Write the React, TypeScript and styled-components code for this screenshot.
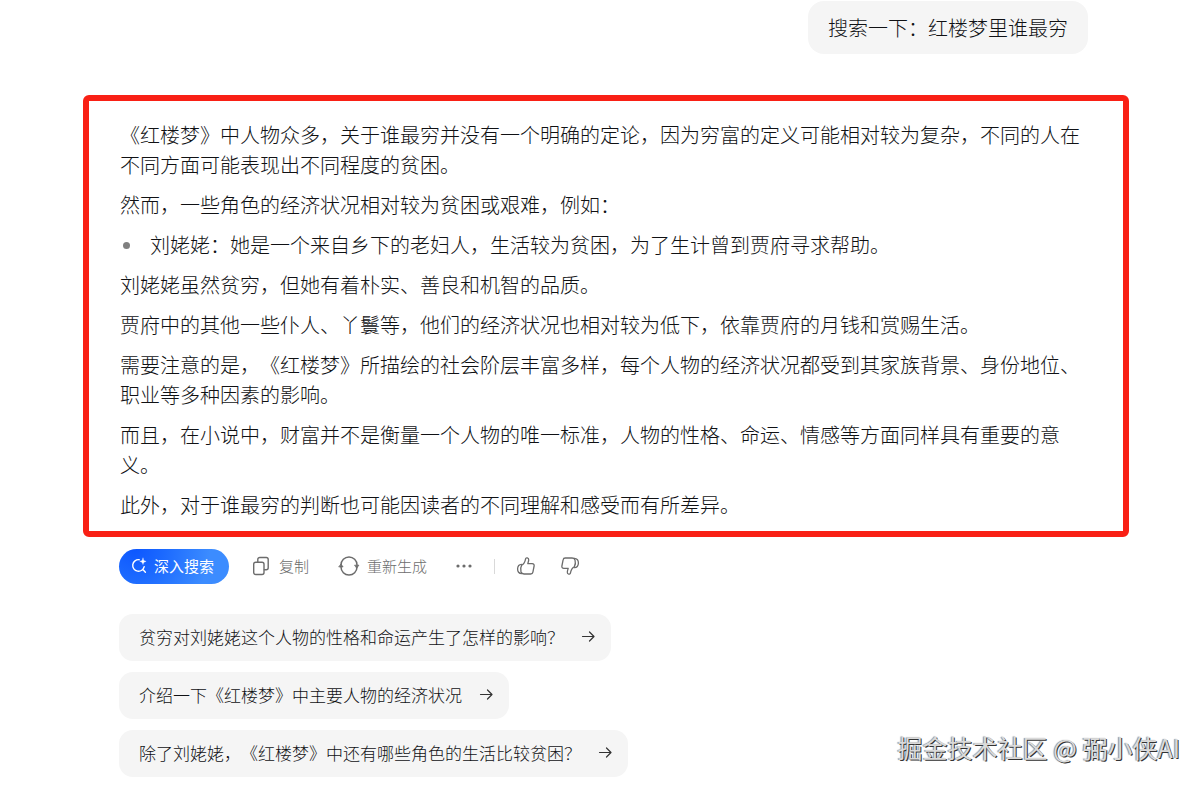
import React from "react";
import styled, { createGlobalStyle } from "styled-components";

const GlobalStyle = createGlobalStyle`
  * { box-sizing: border-box; }
  body {
    margin: 0;
    background: #fff;
    color: #101114;
    font-family: "Noto Sans CJK SC", sans-serif;
    font-weight: 300;
    text-spacing-trim: space-all;
  }
  button { font-family: inherit; text-spacing-trim: inherit; cursor: pointer; }
`;

const Page = styled.main`
  position: relative;
  padding: 1px 74px 9px 83px;
`;

const QuestionRow = styled.div`
  display: flex;
  justify-content: flex-end;
  padding-right: 41px;
  margin-bottom: 41px;
`;

const Question = styled.p`
  margin: 0;
  padding: 12px 20px 11px;
  border-radius: 16px;
  background: #f5f5f5;
  font-size: 20px;
  line-height: 30px;
`;

const Answer = styled.article`
  display: flex;
  flex-direction: column;
  gap: 10px;
  padding: 19px 35px 11px 31px;
  border: 6px solid #f92015;
  border-radius: 6px;
  font-size: 20px;
  line-height: 30px;
`;

const Paragraph = styled.p`
  margin: 0;
`;

const List = styled.ul`
  margin: 0;
  padding: 0;
  list-style: none;
`;

const Item = styled.li`
  display: flex;
  align-items: center;
  gap: 20px;
  padding-left: 3px;

  &::before {
    content: "";
    width: 7px;
    height: 7px;
    border-radius: 50%;
    background: #808080;
  }
`;

const Below = styled.div`
  padding-left: 36px;
`;

const Toolbar = styled.div`
  display: flex;
  align-items: center;
  height: 35px;
  margin: 12px 0 30px;
`;

const DeepSearch = styled.button`
  display: flex;
  align-items: center;
  gap: 5px;
  height: 35px;
  margin-right: 23px;
  padding: 0 15px 2px 12px;
  border: 0;
  border-radius: 18px;
  background: radial-gradient(circle at 14% 0%, #0d57ff 0%, #1c6aff 30%, #3c8cff 75%);
  color: #fff;
  font-size: 15px;
  font-weight: 400;
  line-height: 20px;
`;

const Action = styled.button<{ $after: number; $gap?: number }>`
  display: flex;
  align-items: center;
  gap: ${(p) => p.$gap ?? 0}px;
  margin-right: ${(p) => p.$after}px;
  padding: 0 0 1px;
  border: 0;
  background: none;
  color: #6c6c6c;
  font-size: 15px;
  font-weight: 300;
  line-height: 20px;
`;

const Divider = styled.span`
  width: 1px;
  height: 15px;
  margin-right: 21px;
  background: #d9d9d9;
`;

const Suggestions = styled.div`
  display: flex;
  flex-direction: column;
  align-items: flex-start;
  gap: 11px;
`;

const Suggestion = styled.button`
  display: flex;
  align-items: center;
  gap: 17px;
  height: 47px;
  padding: 0 16px 1px 20px;
  border: 0;
  border-radius: 14px;
  background: #f5f5f5;
  color: #101114;
  font-size: 17px;
  font-weight: 300;
  line-height: 26px;
`;

const Watermark = styled.div`
  position: absolute;
  right: 23px;
  bottom: 21px;
  color: #dadada;
  font-size: 25px;
  font-weight: 400;
  line-height: 36px;
  text-shadow: 1px 1px 0 #333, -1px 0 1px #8a8a8a;
`;

const Icon = styled.svg`
  display: block;
  flex: none;
  fill: none;
  stroke: currentColor;
  stroke-linecap: round;
  stroke-linejoin: round;
`;

const SearchIcon = () => (
  <Icon width="18" height="18" viewBox="0 0 18 18" strokeWidth="1.4">
    <path d="M8.2 2.7A5.8 5.8 0 1 0 13.2 9.6M11.9 12.6l2.5 2.7" />
    <path d="M12 1.2c.3 2.2 1 2.8 3.1 3.2-2.1.4-2.8 1-3.1 3.1-.4-2.1-1-2.7-3.2-3.1C11 4 11.600 3.400 12 1.200Z" fill="currentColor" strokeWidth=".4" />
  </Icon>
);

const CopyIcon = () => (
  <Icon width="18" height="20" viewBox="0 0 18 20" strokeWidth="1.4">
    <rect x="1.700" y="6.200" width="10.300" height="12.300" rx="2" />
    <path d="M5.800 5.800V3.500a2 2 0 0 1 2-2h6.400a2 2 0 0 1 2 2v8.300a2 2 0 0 1-2 2h-1.800" />
  </Icon>
);

const RefreshIcon = () => (
  <Icon width="22" height="20" viewBox="0 0 22 20" strokeWidth="1.500">
    <path d="M3 9a8 8 0 0 1 16 0M19 11a8 8 0 0 1-16 0" />
    <path d="M16.900 9.200h4l-2 2.600zM1.100 10.900h4l-2-2.600z" fill="currentColor" strokeWidth=".8" />
  </Icon>
);

const DotsIcon = () => (
  <Icon width="16" height="4" viewBox="0 0 16 4">
    <g fill="currentColor" stroke="none">
      <circle cx="2" cy="2" r="1.600" />
      <circle cx="8" cy="2" r="1.600" />
      <circle cx="14" cy="2" r="1.600" />
    </g>
  </Icon>
);

const ThumbIcon = ({ down = false }: { down?: boolean }) => (
  <Icon width="20" height="20" viewBox="0 0 20 20" strokeWidth="1.300">
    <g transform={down ? "rotate(180 10 10)" : undefined}>
      <path d="M5.700 9.200C7.900 8 9.100 5.500 9.600 2.800c.3-1.500 3.300-1.300 3.100 1.100-.1 1.400-.5 2.600-.9 3.700h4.400c1.500 0 2.200 1 1.900 2.400l-1.200 6.100c-.2 1.200-1 1.900-2.200 1.900H8c-1.300 0-2.500-.6-3-1.900-.6-2.200-.5-4.900.7-6.900Z" />
      <path d="M5.600 8.400c-2.400.1-3.900 1.900-4 4.400-.1 2.800 1.200 4.800 4.200 4.900" />
    </g>
  </Icon>
);

const ArrowIcon = () => (
  <Icon width="14" height="14" viewBox="0 0 14 14" strokeWidth="1.200" color="#333">
    <path d="M1.500 6.500h11.500M8.500 2l4.500 4.500L8.500 11" />
  </Icon>
);

const suggestions = [
  "贫穷对刘姥姥这个人物的性格和命运产生了怎样的影响？",
  "介绍一下《红楼梦》中主要人物的经济状况",
  "除了刘姥姥，《红楼梦》中还有哪些角色的生活比较贫困？",
];

export default function App() {
  return (
    <Page lang="zh-CN">
      <GlobalStyle />
      <QuestionRow>
        <Question>搜索一下：红楼梦里谁最穷</Question>
      </QuestionRow>
      <Answer>
        <Paragraph>
          《红楼梦》中人物众多，关于谁最穷并没有一个明确的定论，因为穷富的定义可能相对较为复杂，不同的人在不同方面可能表现出不同程度的贫困。
        </Paragraph>
        <Paragraph>然而，一些角色的经济状况相对较为贫困或艰难，例如：</Paragraph>
        <List>
          <Item>刘姥姥：她是一个来自乡下的老妇人，生活较为贫困，为了生计曾到贾府寻求帮助。</Item>
        </List>
        <Paragraph>刘姥姥虽然贫穷，但她有着朴实、善良和机智的品质。</Paragraph>
        <Paragraph>
          贾府中的其他一些仆人、丫鬟等，他们的经济状况也相对较为低下，依靠贾府的月钱和赏赐生活。
        </Paragraph>
        <Paragraph>
          需要注意的是，《红楼梦》所描绘的社会阶层丰富多样，每个人物的经济状况都受到其家族背景、身份地位、职业等多种因素的影响。
        </Paragraph>
        <Paragraph>
          而且，在小说中，财富并不是衡量一个人物的唯一标准，人物的性格、命运、情感等方面同样具有重要的意义。
        </Paragraph>
        <Paragraph>此外，对于谁最穷的判断也可能因读者的不同理解和感受而有所差异。</Paragraph>
      </Answer>
      <Below>
        <Toolbar>
          <DeepSearch type="button">
            <SearchIcon />
            深入搜索
          </DeepSearch>
          <Action type="button" $gap={9} $after={29}>
            <CopyIcon />
            复制
          </Action>
          <Action type="button" $gap={7} $after={29}>
            <RefreshIcon />
            重新生成
          </Action>
          <Action type="button" aria-label="更多" $after={22}>
            <DotsIcon />
          </Action>
          <Divider />
          <Action type="button" aria-label="赞" $after={24}>
            <ThumbIcon />
          </Action>
          <Action type="button" aria-label="踩" $after={0}>
            <ThumbIcon down />
          </Action>
        </Toolbar>
        <Suggestions>
          {suggestions.map((text) => (
            <Suggestion type="button" key={text}>
              {text}
              <ArrowIcon />
            </Suggestion>
          ))}
        </Suggestions>
      </Below>
      <Watermark>掘金技术社区 @ 弼小侠AI</Watermark>
    </Page>
  );
}
